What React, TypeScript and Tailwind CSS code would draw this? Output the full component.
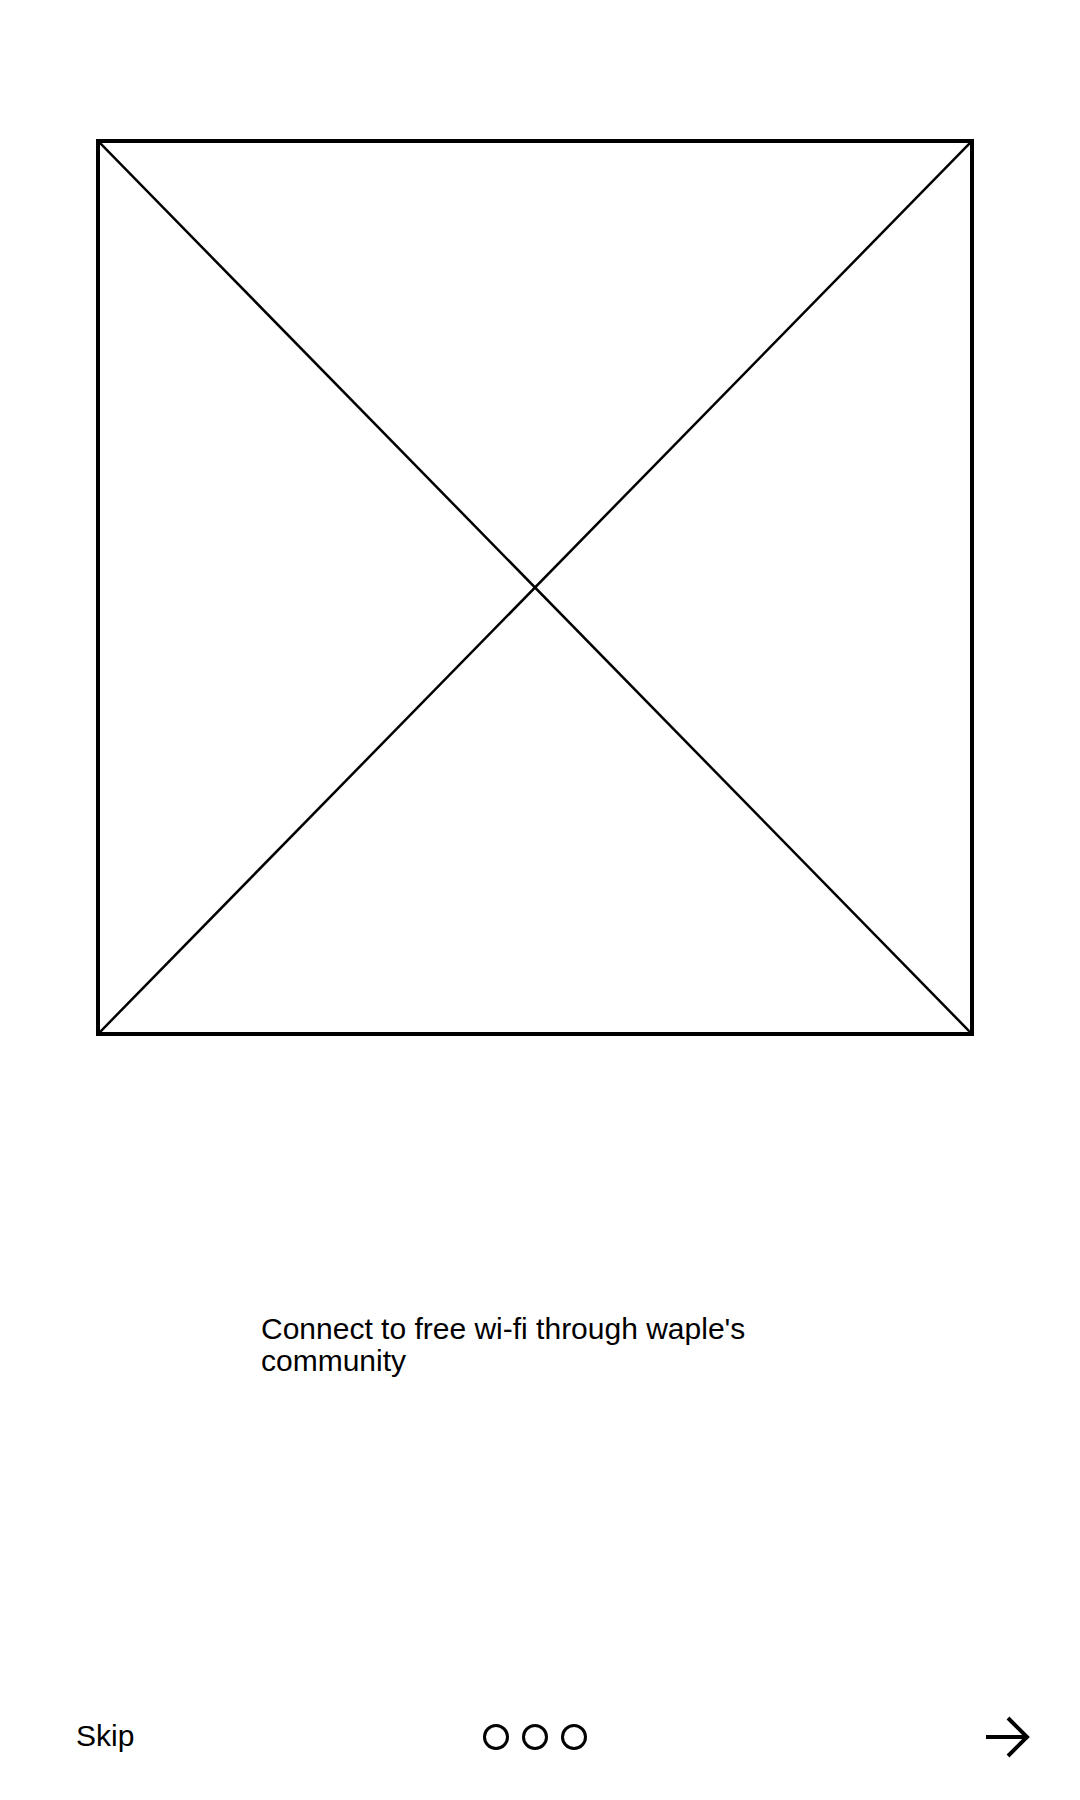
import React from "react";

export default function App() {
  return (
    <div className="w-[1080px] h-[1800px] bg-white flex flex-col text-black" style={{ fontFamily: '"Liberation Sans", Arial, sans-serif' }}>
      <div className="pt-[139px] pl-[96px]">
        <div className="relative w-[878px] h-[897px] border-[4px] border-black">
          <svg className="absolute inset-0 w-full h-full" viewBox="0 0 870 889" preserveAspectRatio="none">
            <line x1="0" y1="0" x2="870" y2="889" stroke="black" strokeWidth="2.5" />
            <line x1="870" y1="0" x2="0" y2="889" stroke="black" strokeWidth="2.5" />
          </svg>
        </div>
      </div>
      <div className="pl-[261px] mt-[277px] text-[30px] leading-[32px] w-[900px]">
        <p>Connect to free wi-fi through waple's</p>
        <p>community</p>
      </div>
      <div className="flex-1" />
      <div className="flex items-center pb-[42px]">
        <div className="w-[400px] pl-[76px]">
          <span className="text-[30px] leading-none">Skip</span>
        </div>
        <div className="flex gap-[13px] ml-[83px]">
          <span className="w-[26px] h-[26px] rounded-full border-[3px] border-black" />
          <span className="w-[26px] h-[26px] rounded-full border-[3px] border-black" />
          <span className="w-[26px] h-[26px] rounded-full border-[3px] border-black" />
        </div>
        <div className="flex-1 flex justify-end pr-[50px]">
          <svg width="46" height="42" viewBox="0 0 46 42" fill="none" stroke="black" strokeWidth="4">
            <line x1="2" y1="21" x2="43" y2="21" />
            <polyline points="24,2 43,21 24,40" />
          </svg>
        </div>
      </div>
    </div>
  );
}
